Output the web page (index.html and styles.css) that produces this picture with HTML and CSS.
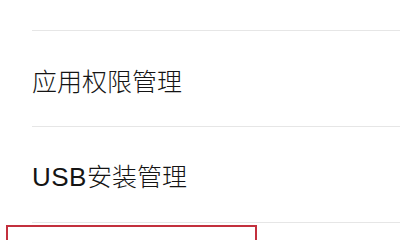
FILE: index.html
```html
<!DOCTYPE html>
<html lang="zh">
<head>
<meta charset="utf-8">
<link rel="stylesheet" href="styles.css">
</head>
<body>
<div class="list">
  <div class="row row-top"></div>
  <div class="row"><span class="label">应用权限管理</span></div>
  <div class="row"><span class="label"><span class="latin">USB</span>安装管理</span></div>
</div>
<div class="highlight"></div>
</body>
</html>
```
FILE: styles.css
```css
html, body {
  margin: 0;
  padding: 0;
  background: #ffffff;
  width: 400px;
  height: 240px;
  overflow: hidden;
}
body {
  position: relative;
  font-family: "Noto Sans CJK SC", "Noto Sans", sans-serif;
  color: #141414;
}
.list {
  display: flex;
  flex-direction: column;
}
.row {
  box-sizing: border-box;
  height: 96px;
  margin-left: 32px;
  border-bottom: 1px solid #e6e6e6;
  display: flex;
  align-items: center;
  padding-top: 3px;
}
.row-top {
  height: 31px;
}
.label {
  font-size: 25px;
  font-weight: 300;
  line-height: 1;
}
.latin {
  font-family: "Liberation Sans", Arial, sans-serif;
  font-size: 26px;
  font-weight: 400;
  letter-spacing: 0.5px;
}
.highlight {
  position: absolute;
  left: 6px;
  top: 225px;
  width: 251px;
  height: 15px;
  box-sizing: border-box;
  border: 2.5px solid #c3303d;
  border-bottom: none;
}
```
